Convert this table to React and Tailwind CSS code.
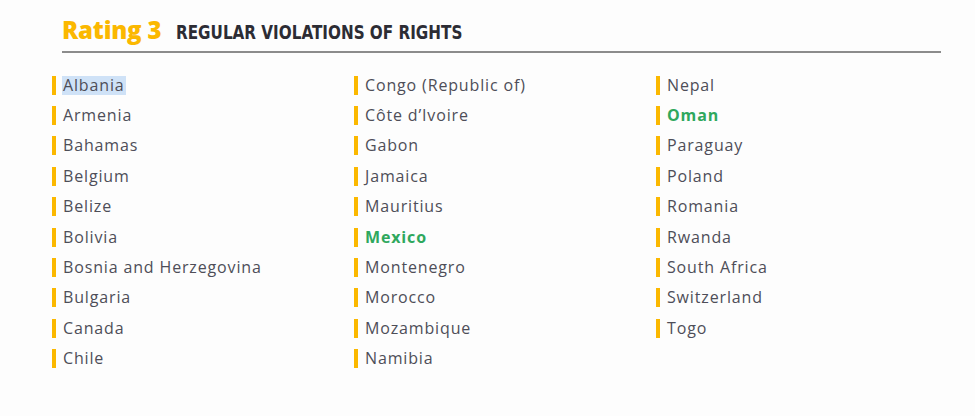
const columns = [
  [
    { name: 'Albania', selected: true },
    { name: 'Armenia' },
    { name: 'Bahamas' },
    { name: 'Belgium' },
    { name: 'Belize' },
    { name: 'Bolivia' },
    { name: 'Bosnia and Herzegovina' },
    { name: 'Bulgaria' },
    { name: 'Canada' },
    { name: 'Chile' },
  ],
  [
    { name: 'Congo (Republic of)' },
    { name: 'Côte d’Ivoire' },
    { name: 'Gabon' },
    { name: 'Jamaica' },
    { name: 'Mauritius' },
    { name: 'Mexico', highlight: true },
    { name: 'Montenegro' },
    { name: 'Morocco' },
    { name: 'Mozambique' },
    { name: 'Namibia' },
  ],
  [
    { name: 'Nepal' },
    { name: 'Oman', highlight: true },
    { name: 'Paraguay' },
    { name: 'Poland' },
    { name: 'Romania' },
    { name: 'Rwanda' },
    { name: 'South Africa' },
    { name: 'Switzerland' },
    { name: 'Togo' },
  ],
];

const Country = ({ country }) => (
  <li className="flex items-center h-[30.4px]">
    <span className="w-[4px] h-[19px] bg-[#fbb800] mr-[6px] shrink-0"></span>
    <span
      className={
        (country.highlight ? 'font-bold text-[#2fa85d] ' : 'text-[#4e4e58] ') +
        (country.selected ? 'bg-[#cfe2f7] ' : '') +
        'text-[16px] leading-[19px] tracking-[0.85px] px-px'
      }
    >
      {country.name}
    </span>
  </li>
);

const App = () => {
  return (
    <div className="w-[975px] h-[416px] bg-[#fdfdfd] font-['Open_Sans',sans-serif]">
      <div className="pl-[62px] pt-[15px] w-[941px]">
        <div className="flex items-baseline border-b-2 border-[#8c8c8c] pb-[4px]">
          <h1 className="text-[24px] font-extrabold text-[#fbb800] leading-[30px] tracking-[-0.2px] mr-[15px]">
            Rating 3
          </h1>
          <h2 className="inline-block origin-left scale-x-[0.8] font-['DejaVu_Sans',sans-serif] font-bold text-[19px] text-[#2c2c34] uppercase leading-[30px] whitespace-nowrap">
            Regular violations of rights
          </h2>
        </div>
      </div>

      {/* Country columns */}
      <div className="flex pl-[52px] pt-[17px]">
        {columns.map((col, i) => (
          <ul key={i} className="w-[302px]">
            {col.map((c) => (
              <Country key={c.name} country={c} />
            ))}
          </ul>
        ))}
      </div>
    </div>
  );
};

export default App;
